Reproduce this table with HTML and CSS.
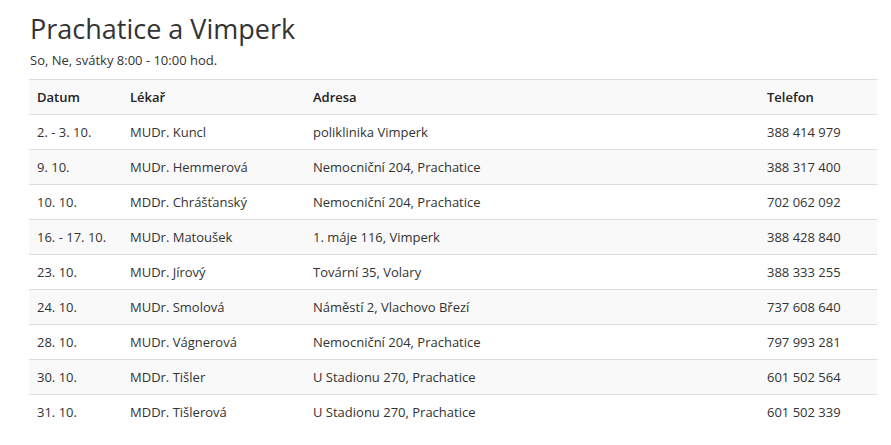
FILE: index.html
```html
<!DOCTYPE html>
<html lang="cs">
<head>
<meta charset="utf-8">
<title>Prachatice a Vimperk</title>
<link rel="stylesheet" href="styles.css">
</head>
<body>
<div class="page">
  <h1 class="title">Prachatice a Vimperk</h1>
  <p class="note">So, Ne, svátky 8:00 - 10:00 hod.</p>
  <table class="duty">
    <colgroup>
      <col class="c-date"><col class="c-doc"><col class="c-addr"><col class="c-tel">
    </colgroup>
    <tbody>
      <tr class="head"><td>Datum</td><td>Lékař</td><td>Adresa</td><td>Telefon</td></tr>
      <tr><td>2. - 3. 10.</td><td>MUDr. Kuncl</td><td>poliklinika Vimperk</td><td>388 414 979</td></tr>
      <tr><td>9. 10.</td><td>MUDr. Hemmerová</td><td>Nemocniční 204, Prachatice</td><td>388 317 400</td></tr>
      <tr><td>10. 10.</td><td>MDDr. Chrášťanský</td><td>Nemocniční 204, Prachatice</td><td>702 062 092</td></tr>
      <tr><td>16. - 17. 10.</td><td>MUDr. Matoušek</td><td>1. máje 116, Vimperk</td><td>388 428 840</td></tr>
      <tr><td>23. 10.</td><td>MUDr. Jírový</td><td>Tovární 35, Volary</td><td>388 333 255</td></tr>
      <tr><td>24. 10.</td><td>MUDr. Smolová</td><td>Náměstí 2, Vlachovo Březí</td><td>737 608 640</td></tr>
      <tr><td>28. 10.</td><td>MUDr. Vágnerová</td><td>Nemocniční 204, Prachatice</td><td>797 993 281</td></tr>
      <tr><td>30. 10.</td><td>MDDr. Tišler</td><td>U Stadionu 270, Prachatice</td><td>601 502 564</td></tr>
      <tr><td>31. 10.</td><td>MDDr. Tišlerová</td><td>U Stadionu 270, Prachatice</td><td>601 502 339</td></tr>
    </tbody>
  </table>
</div>
</body>
</html>
```
FILE: styles.css
```css
html, body {
  margin: 0;
  padding: 0;
  background: #fff;
}
body {
  font-family: "Open Sans", "Liberation Sans", sans-serif;
  font-size: 13px;
  color: #333;
}
.page {
  padding-left: 29px;
  width: 848px;
  overflow: hidden;
}
.title {
  margin: 13px 0 7px 1px;
  font-size: 27px;
  line-height: 31px;
  font-weight: 400;
  color: #333;
}
.note {
  margin: 0 0 10px 1px;
  line-height: 18px;
}
.duty {
  width: 848px;
  border-collapse: collapse;
  border-spacing: 0;
  table-layout: fixed;
}
.c-date { width: 93px; }
.c-doc { width: 183px; }
.c-addr { width: 454px; }
.c-tel { width: 118px; }
.duty td {
  padding: 8px;
  line-height: 18px;
  border-top: 1px solid #ddd;
  vertical-align: top;
  white-space: nowrap;
}
.duty tr:nth-child(odd) td {
  background: #f9f9f9;
}
.duty tr.head td {
  font-weight: 600;
  color: #222;
}
```
